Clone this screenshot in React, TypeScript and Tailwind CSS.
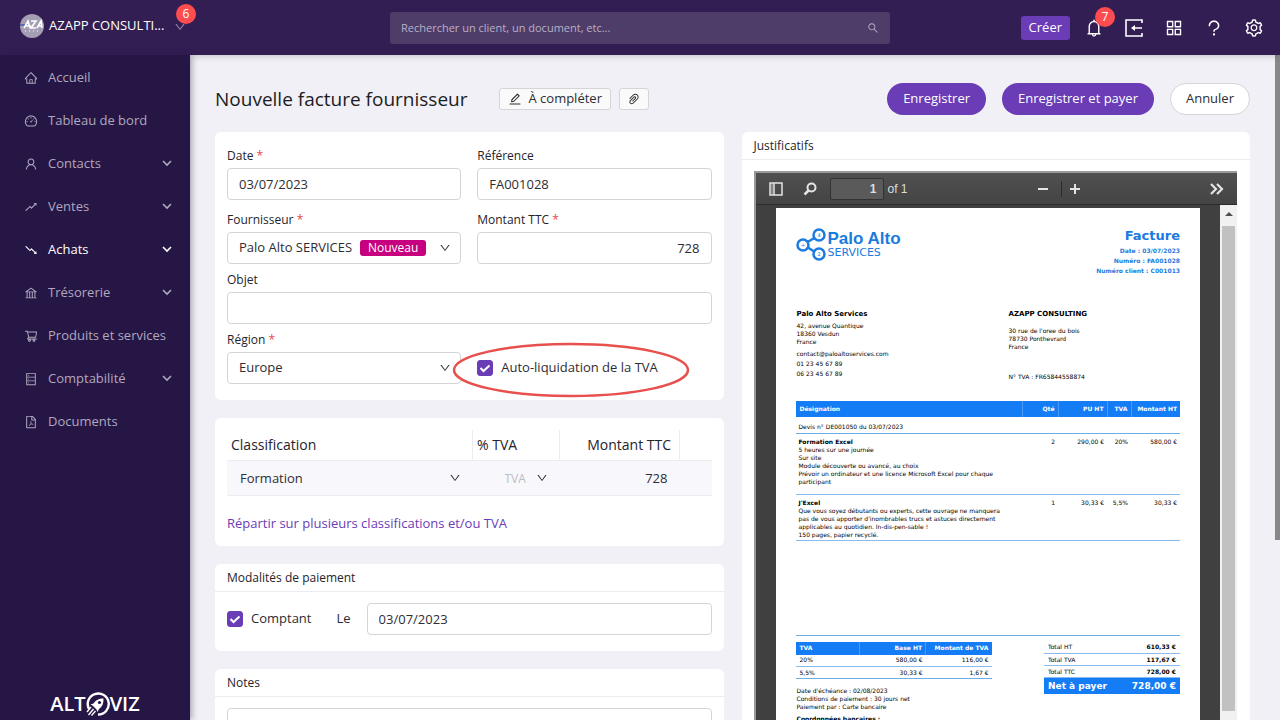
import { useState } from "react";
import type { ReactNode } from "react";
import {
    AiOutlineAppstore,
    AiOutlineBank,
    AiOutlineBell,
    AiOutlineDashboard,
    AiOutlineDatabase,
    AiOutlineDown,
    AiOutlineEdit,
    AiOutlineFall,
    AiOutlineFilePdf,
    AiOutlineHome,
    AiOutlinePaperClip,
    AiOutlineQuestion,
    AiOutlineRise,
    AiOutlineSearch,
    AiOutlineSetting,
    AiOutlineShoppingCart,
    AiOutlineUser,
} from "react-icons/ai";

const NAV = [
    { label: "Accueil", icon: AiOutlineHome },
    { label: "Tableau de bord", icon: AiOutlineDashboard },
    { label: "Contacts", icon: AiOutlineUser, expandable: true },
    { label: "Ventes", icon: AiOutlineRise, expandable: true },
    { label: "Achats", icon: AiOutlineFall, expandable: true, active: true },
    { label: "Trésorerie", icon: AiOutlineBank, expandable: true },
    { label: "Produits et services", icon: AiOutlineShoppingCart },
    { label: "Comptabilité", icon: AiOutlineDatabase, expandable: true },
    { label: "Documents", icon: AiOutlineFilePdf },
];

const INVOICE_LINES = [
    {
        title: "Formation Excel",
        text: [
            "5 heures sur une journée",
            "Sur site",
            "Module découverte ou avancé, au choix",
            "Prévoir un ordinateur et une licence Microsoft Excel pour chaque",
            "participant",
        ],
        qty: "2",
        unit: "290,00 €",
        vat: "20%",
        total: "580,00 €",
        height: "h-[61px]",
    },
    {
        title: "J'Excel",
        text: [
            "Que vous soyez débutants ou experts, cette ouvrage ne manquera",
            "pas de vous apporter d'inombrables trucs et astuces directement",
            "applicables au quotidien. In-dis-pen-sable !",
            "150 pages, papier recyclé.",
        ],
        qty: "1",
        unit: "30,33 €",
        vat: "5,5%",
        total: "30,33 €",
        height: "h-[46px]",
    },
];

const TOTALS = [
    ["Total HT", "610,33 €"],
    ["Total TVA", "117,67 €"],
    ["Total TTC", "728,00 €"],
];

const inputClass =
    "h-8 w-full min-w-0 rounded border border-[#d5d5d9] bg-white px-[11px] text-[13px] text-[#2d2d33] outline-none focus:border-[#6a3cb5]";

function Header() {
    return (
        <header className="relative z-10 flex h-[55px] shrink-0 items-center justify-between bg-[#331e54] pl-5 pr-4 text-white shadow-md">
            <button className="relative -mt-1 flex w-[170px] items-center gap-1">
                <svg viewBox="0 0 24 24" className="size-6 shrink-0">
                    <circle cx="12" cy="12" r="12" fill="#a49fb4" />
                    <path d="M0 11h7" stroke="#4656b0" strokeWidth="1.500" />
                    <path d="M4 14l4-7 2 7M6 12h5M11 7h5l-5 7h5M17 14l4-7 1 7M18 12h4" fill="none" stroke="#fff" strokeWidth="1.600" />
                    <path d="M5 17h1M9 17h1M13 17h1M17 17h1" stroke="#fff" strokeWidth="1" />
                </svg>
                <span className="whitespace-nowrap pl-px text-[13px] font-medium">AZAPP CONSULTI...</span>
                <AiOutlineDown className="absolute left-[154px] top-[7px] size-3 text-[#9b8fb0]" />
                <span className="absolute -top-2.5 left-[156px] flex size-5 items-center justify-center rounded-full bg-[#ff4d4f] text-xs">6</span>
            </button>

            <form role="search" className="absolute left-1/2 top-3 flex h-8 w-[500px] -translate-x-1/2 items-center rounded-[3px] bg-[#4e3d69] px-[11px]">
                <input
                    type="search"
                    aria-label="Rechercher"
                    placeholder="Rechercher un client, un document, etc..."
                    className="min-w-0 flex-1 bg-transparent text-[11px] outline-none placeholder:text-[#b9b0c6]"
                />
                <AiOutlineSearch className="size-3 text-[#b9b0c6]" />
            </form>

            <div className="flex items-center gap-5">
                <button className="-mr-1.5 h-6 rounded-[3px] bg-[#6a3cb5] px-2 text-[13px]">Créer</button>
                <button aria-label="Notifications" className="relative">
                    <AiOutlineBell className="size-5" />
                    <span className="absolute -top-[11px] left-[11px] flex size-5 items-center justify-center rounded-full bg-[#ff4d4f] text-xs">7</span>
                </button>
                <button aria-label="Se déconnecter">
                    <svg viewBox="0 0 20 20" className="size-5" fill="none" stroke="currentColor" strokeWidth="1.600">
                        <path d="M18 5V2H2v16h16v-3M9 10h9" />
                        <path d="M7 10l4-3v6z" fill="currentColor" stroke="none" />
                    </svg>
                </button>
                <button aria-label="Applications"><AiOutlineAppstore className="size-5" /></button>
                <button aria-label="Aide"><AiOutlineQuestion className="size-5" /></button>
                <button aria-label="Paramètres"><AiOutlineSetting className="size-5" /></button>
            </div>
        </header>
    );
}

function Sidebar() {
    return (
        <aside className="relative z-10 flex w-[190px] shrink-0 flex-col bg-[#261645] shadow-[2px_0_6px_rgba(30,20,60,0.35)]">
            <nav className="flex-1 pt-px">
                {NAV.map(({ label, icon: Icon, expandable, active }) => (
                    <a
                        key={label}
                        href="#"
                        className={`flex h-[43px] items-center pl-6 pr-[18px] text-[13px] ${active ? "font-medium text-white" : "text-[#b0a8bf]"}`}
                    >
                        <Icon className="mr-2.5 size-3.5 shrink-0" />
                        <span className="flex-1 whitespace-nowrap">{label}</span>
                        {expandable && (
                            <svg viewBox="0 0 10 10" className="size-2.5 shrink-0" fill="none" stroke="currentColor" strokeWidth="1.600">
                                <path d="M1 2l4 4 4-4" />
                            </svg>
                        )}
                    </a>
                ))}
            </nav>
            <div className="flex h-7 items-start justify-center text-xl font-semibold leading-6 text-white">
                <span>ALT</span>
                <svg viewBox="0 0 24 24" className="size-6" fill="none" stroke="#fff">
                    <path d="M3 17A10.500 10.500 0 1 1 12 22.500" strokeWidth="2.400" />
                    <path d="M17.500 6.500c-5 0-8 2-10 5l-3 1 2 1 4 4 1 2.500 1.500-3c3-2 4.800-5.500 4.500-10.500z" fill="#fff" stroke="none" />
                    <circle cx="13.500" cy="10.500" r="1.600" fill="#261645" stroke="none" />
                    <path d="M5 15l-4 5M7.500 17l-5 6M9.500 19l-4 4.500" strokeWidth="1.400" />
                </svg>
                <span>VIZ</span>
            </div>
        </aside>
    );
}

function Field({ id, label, required, children }: { id: string; label: string; required?: boolean; children: ReactNode }) {
    return (
        <div className="min-w-0">
            <label htmlFor={id} className="block h-[22px] text-xs font-medium leading-5 text-[#24242c]">
                {label} {required && <span className="text-[#e5484d]">*</span>}
            </label>
            {children}
        </div>
    );
}

function Select({ id, value, children }: { id: string; value: string; children?: ReactNode }) {
    return (
        <div className="relative">
            <select id={id} className={`${inputClass} appearance-none`}>
                <option>{value}</option>
            </select>
            {children}
            <AiOutlineDown className="pointer-events-none absolute right-2.5 top-2.5 size-3 text-[#2d2d33]" />
        </div>
    );
}

function Checkbox({ label }: { label: string }) {
    const [checked, setChecked] = useState(true);
    return (
        <label className="relative flex items-center gap-2 whitespace-nowrap text-[13px] text-[#2d2d33]">
            <input
                type="checkbox"
                checked={checked}
                onChange={(e) => setChecked(e.target.checked)}
                className="size-4 appearance-none rounded-[3px] border border-[#6a3cb5] checked:bg-[#6a3cb5]"
            />
            {checked && (
                <svg viewBox="0 0 16 16" className="pointer-events-none absolute left-0 size-4" fill="none" stroke="#fff" strokeWidth="2">
                    <path d="M3.500 8l3 3 6-5.500" />
                </svg>
            )}
            {label}
        </label>
    );
}

function Card({ title, children, className = "" }: { title?: string; children: ReactNode; className?: string }) {
    return (
        <section className={`shrink-0 rounded-md bg-white ${className}`}>
            {title && <h2 className="h-7 border-b border-[#ececf0] px-3 text-xs font-medium leading-[27px] text-[#24242c]">{title}</h2>}
            {children}
        </section>
    );
}

function Invoice() {
    return (
        <article className="mx-5 mt-[3px] h-[600px] bg-white px-5 pt-5 font-['DejaVu_Sans',sans-serif] text-[6px] leading-2 text-black">
            <div className="flex h-[82px] justify-between">
                <div className="flex items-start">
                    <svg viewBox="0 0 32 34" className="h-[34px] w-8" fill="#fff" stroke="#1b7be0" strokeWidth="2.500">
                        <path d="M8 16L22 8M8 17l14 9" />
                        <circle cx="7" cy="17" r="5.500" />
                        <circle cx="23" cy="7" r="5.500" />
                        <circle cx="23" cy="26" r="5.500" />
                        <text x="5" y="19" fontSize="5" fill="#1b7be0" stroke="none">+</text>
                        <text x="21.500" y="9" fontSize="5" fill="#1b7be0" stroke="none">4</text>
                        <text x="21.500" y="28" fontSize="5" fill="#1b7be0" stroke="none">2</text>
                    </svg>
                    <div className="pt-0.5 text-[#1b7be0]">
                        <div className="font-['Liberation_Sans',sans-serif] text-[17px] font-bold leading-[18px]">Palo Alto</div>
                        <div className="text-[11px] leading-2.5">SERVICES</div>
                    </div>
                </div>
                <div className="text-right font-bold leading-2.5 text-[#1b7be0]">
                    <div className="mb-0.5 text-[13px] leading-4">Facture</div>
                    <div>Date : 03/07/2023</div>
                    <div>Numéro : FA001028</div>
                    <div>Numéro client : C001013</div>
                </div>
            </div>

            <div className="grid h-[91px] grid-cols-[212px_1fr] px-px">
                <div>
                    <div className="mb-1 text-[7px] font-bold">Palo Alto Services</div>
                    <div>42, avenue Quantique</div>
                    <div>18360 Vesdun</div>
                    <div>France</div>
                    <div className="mt-[3px] leading-2.5">contact@paloaltoservices.com</div>
                    <div className="leading-2.5">01 23 45 67 89</div>
                    <div className="leading-2.5">06 23 45 67 89</div>
                </div>
                <div>
                    <div className="mb-[9px] text-[7px] font-bold">AZAPP CONSULTING</div>
                    <div>30 rue de l'oree du bois</div>
                    <div>78730 Ponthevrard</div>
                    <div>France</div>
                    <div className="mt-[22px]">N° TVA : FR65844558874</div>
                </div>
            </div>

            <table className="w-full table-fixed border-collapse">
                <colgroup>
                    <col />
                    <col className="w-9" />
                    <col className="w-[49px]" />
                    <col className="w-6" />
                    <col className="w-[49px]" />
                </colgroup>
                <thead>
                    <tr className="h-4 bg-[#147cf5] text-right text-white">
                        <th className="px-1 text-left">Désignation</th>
                        <th className="border-l border-[#4b9bf8] px-[3px]">Qté</th>
                        <th className="border-l border-[#4b9bf8] px-[3px]">PU HT</th>
                        <th className="border-l border-[#4b9bf8] px-[3px]">TVA</th>
                        <th className="whitespace-nowrap border-l border-[#4b9bf8] px-[3px]">Montant HT</th>
                    </tr>
                </thead>
                <tbody>
                    <tr className="h-4 border-b border-[#6aaee8]">
                        <td colSpan={5} className="px-[3px] pt-1">Devis n° DE001050 du 03/07/2023</td>
                    </tr>
                    {INVOICE_LINES.map((line) => (
                        <tr key={line.title} className={`border-b border-[#8abbef] text-right align-top ${line.height}`}>
                            <td className="whitespace-nowrap px-[3px] pt-1 text-left">
                                <div className="font-bold">{line.title}</div>
                                {line.text.map((t) => <div key={t}>{t}</div>)}
                            </td>
                            <td className="px-[3px] pt-1">{line.qty}</td>
                            <td className="px-[3px] pt-1">{line.unit}</td>
                            <td className="px-[3px] pt-1">{line.vat}</td>
                            <td className="px-[3px] pt-1">{line.total}</td>
                        </tr>
                    ))}
                </tbody>
            </table>

            <div className="mt-[94px] flex items-start justify-between border-t border-[#6aaee8] pt-1.5">
                <div>
                    <table className="w-[196px] table-fixed border-collapse text-right">
                        <thead>
                            <tr className="h-[13px] bg-[#147cf5] text-white">
                                <th className="w-16 px-1 text-left">TVA</th>
                                <th className="border-x border-[#4b9bf8] px-[3px]">Base HT</th>
                                <th className="w-[66px] whitespace-nowrap px-[3px]">Montant de TVA</th>
                            </tr>
                        </thead>
                        <tbody>
                            <tr className="h-3 border-b border-[#8abbef]">
                                <td className="px-1 text-left">20%</td>
                                <td className="px-[3px]">580,00 €</td>
                                <td className="px-[3px]">116,00 €</td>
                            </tr>
                            <tr className="h-3 border-b border-[#6aaee8]">
                                <td className="px-1 text-left">5,5%</td>
                                <td className="px-[3px]">30,33 €</td>
                                <td className="px-[3px]">1,67 €</td>
                            </tr>
                        </tbody>
                    </table>
                    <div className="mt-2 px-px">
                        <div>Date d'échéance : 02/08/2023</div>
                        <div>Conditions de paiement : 30 jours net</div>
                        <div>Paiement par : Carte bancaire</div>
                        <div className="mt-1 font-bold">Coordonnées bancaires :</div>
                    </div>
                </div>
                <table className="w-[136px] border-collapse">
                    <tbody>
                        {TOTALS.map(([name, amount]) => (
                            <tr key={name} className="h-3 border-b border-[#8abbef]">
                                <th className="px-1 text-left font-normal">{name}</th>
                                <td className="px-1 text-right font-bold">{amount}</td>
                            </tr>
                        ))}
                        <tr className="h-4 bg-[#147cf5] text-[9px] font-bold text-white">
                            <th className="whitespace-nowrap px-1 text-left">Net à payer</th>
                            <td className="whitespace-nowrap px-1 text-right">728,00 €</td>
                        </tr>
                    </tbody>
                </table>
            </div>
        </article>
    );
}

function PdfViewer() {
    return (
        <div className="ml-3 mr-[13px] mt-[11px] border-l-2 border-t-2 border-[#999] bg-[#404040] font-['Liberation_Sans',sans-serif] text-[#dcdcdc]">
            <div className="flex h-8 items-center border-b border-[#2b2b2b] bg-linear-to-b from-[#505050] to-[#444] px-[13px]">
                <button aria-label="Panneau latéral">
                    <svg viewBox="0 0 14 14" className="size-3.5" fill="none" stroke="#e4e4e4" strokeWidth="1.500">
                        <path d="M1 1h12v12H1zM5 1v12" />
                        <path d="M3 2v10" stroke="#999" />
                    </svg>
                </button>
                <button aria-label="Rechercher dans le document" className="ml-5">
                    <svg viewBox="0 0 14 14" className="size-3.5" fill="none" stroke="#e4e4e4" strokeWidth="2">
                        <circle cx="8.500" cy="5.500" r="4" />
                        <path d="M5.500 8.500L1.500 12.500" strokeWidth="2.500" />
                    </svg>
                </button>
                <input
                    aria-label="Page"
                    defaultValue="1"
                    className="ml-[13px] h-[22px] w-[54px] rounded-[2px] border border-[#333] bg-[#5a5a5a] px-1.5 text-right text-xs font-bold outline-none"
                />
                <span className="ml-1 text-xs">of 1</span>
                <div className="flex flex-1 items-center justify-center pr-1">
                    <button aria-label="Zoom arrière" className="flex size-5 items-center justify-center">
                        <span className="h-0.5 w-2.5 bg-[#e4e4e4]" />
                    </button>
                    <span className="mx-2 h-4 w-px bg-[#2b2b2b]" />
                    <button aria-label="Zoom avant">
                        <svg viewBox="0 0 10 10" className="size-2.5" stroke="#e4e4e4" strokeWidth="2"><path d="M5 0v10M0 5h10" /></svg>
                    </button>
                </div>
                <button aria-label="Outils">
                    <svg viewBox="0 0 14 12" className="h-3 w-3.5" fill="none" stroke="#e4e4e4" strokeWidth="2.200">
                        <path d="M1 1l5 5-5 5M7 1l5 5-5 5" />
                    </svg>
                </button>
            </div>
            <div className="flex">
                <div className="min-w-0 flex-1"><Invoice /></div>
                <div className="flex w-[17px] flex-col items-center bg-[#f1f1f1]">
                    <svg viewBox="0 0 8 4" className="mb-2.5 mt-[7px] h-1 w-2 shrink-0" fill="#505050"><path d="M0 4l4-4 4 4z" /></svg>
                    <div className="h-[485px] w-[13px] bg-[#c1c1c1]" />
                </div>
            </div>
        </div>
    );
}

function InvoiceForm() {
    return (
        <div className="flex min-w-0 flex-1 flex-col gap-[18px]">
            <Card className="px-3 pb-4 pt-3.5">
                <div className="grid grid-cols-2 gap-x-4 gap-y-1.5">
                    <div className="mb-1">
                        <Field id="date" label="Date" required>
                            <input id="date" defaultValue="03/07/2023" className={inputClass} />
                        </Field>
                    </div>
                    <Field id="reference" label="Référence">
                        <input id="reference" defaultValue="FA001028" className={inputClass} />
                    </Field>
                    <Field id="supplier" label="Fournisseur" required>
                        <Select id="supplier" value="Palo Alto SERVICES">
                            <span className="pointer-events-none absolute left-[133px] top-2 h-4 rounded-[3px] bg-[#c6007e] px-2 text-xs leading-4 text-white">Nouveau</span>
                        </Select>
                    </Field>
                    <Field id="amount" label="Montant TTC" required>
                        <input id="amount" defaultValue="728" className={`${inputClass} text-right`} />
                    </Field>
                    <div className="col-span-2">
                        <Field id="subject" label="Objet">
                            <input id="subject" className={inputClass} />
                        </Field>
                    </div>
                    <Field id="region" label="Région" required>
                        <Select id="region" value="Europe" />
                    </Field>
                    <div className="relative flex items-center pt-[22px]">
                        {/* highlight drawn around the reverse-charge option */}
                        <svg viewBox="0 0 238 56" className="pointer-events-none absolute -left-[25px] top-3 h-14 w-[238px]">
                            <ellipse cx="119" cy="28" rx="117" ry="26" fill="#fff" stroke="#e8504e" strokeWidth="2.500" />
                        </svg>
                        <Checkbox label="Auto-liquidation de la TVA" />
                    </div>
                </div>
            </Card>

            <Card className="px-3 pb-[13px] pt-3">
                <table className="w-full table-fixed text-[13px] leading-5 text-[#2d2d33]">
                    <colgroup>
                        <col />
                        <col className="w-[87px]" />
                        <col className="w-[120px]" />
                        <col className="w-8" />
                    </colgroup>
                    <thead>
                        <tr className="h-[30px] text-left text-sm leading-5 text-[#24242c]">
                            <th className="px-1 font-medium">Classification</th>
                            <th className="border-l border-[#ececf0] px-1 font-medium">% TVA</th>
                            <th className="border-x border-[#ececf0] px-2 text-right font-medium">Montant TTC</th>
                            <th />
                        </tr>
                    </thead>
                    <tbody>
                        <tr className="h-[35px] border-y border-[#ececf0] bg-[#f8f8fc]">
                            <td className="relative">
                                <select aria-label="Classification" className="w-full appearance-none bg-transparent pl-[13px]">
                                    <option>Formation</option>
                                </select>
                                <AiOutlineDown className="pointer-events-none absolute right-3 top-[11px] size-3" />
                            </td>
                            <td className="relative">
                                <select aria-label="% TVA" className="w-full appearance-none bg-transparent pl-8 text-xs text-[#bcbcc2]">
                                    <option>TVA</option>
                                </select>
                                <AiOutlineDown className="pointer-events-none absolute right-3 top-[11px] size-3" />
                            </td>
                            <td className="px-3 text-right">728</td>
                            <td />
                        </tr>
                    </tbody>
                </table>
                <a href="#" className="mt-[17px] block text-[13px] leading-5 text-[#6a3cb5]">Répartir sur plusieurs classifications et/ou TVA</a>
            </Card>

            <Card title="Modalités de paiement">
                <div className="flex items-center px-3 pb-4 pt-[11px]">
                    <Checkbox label="Comptant" />
                    <label htmlFor="due" className="ml-[25px] mr-4 text-[13px] text-[#2d2d33]">Le</label>
                    <input id="due" defaultValue="03/07/2023" className={inputClass} />
                </div>
            </Card>

            <Card title="Notes">
                <div className="px-3 pb-3 pt-[11px]">
                    <textarea aria-label="Notes" rows={4} className="w-full rounded border border-[#d5d5d9]" />
                </div>
            </Card>
        </div>
    );
}

export default function App() {
    return (
        <div className="flex h-screen flex-col overflow-hidden font-['Open_Sans',sans-serif]">
            <Header />
            <div className="flex min-h-0 flex-1">
                <Sidebar />
                <main className="flex min-w-0 flex-1 overflow-hidden bg-[#f1f0f6]">
                    <div className="min-w-0 flex-1 px-[25px]">
                        <div className="flex h-[77px] items-center pt-[11px]">
                            <h1 className="mr-8 text-[19px] font-medium text-[#1c1c24]">Nouvelle facture fournisseur</h1>
                            <button className="flex h-[22px] items-center gap-1.5 rounded-[3px] border border-[#d5d5d9] bg-[#fafafa] px-2 text-[13px] text-[#2d2d33]">
                                <AiOutlineEdit className="size-3.5" />
                                À compléter
                            </button>
                            <button aria-label="Pièces jointes" className="ml-2 flex h-[22px] items-center rounded-[3px] border border-[#d5d5d9] bg-[#fafafa] px-[7px] text-[#2d2d33]">
                                <AiOutlinePaperClip className="size-3.5" />
                            </button>
                            <div className="ml-auto flex gap-4 whitespace-nowrap text-[13px]">
                                <button className="h-8 rounded-full bg-[#6a3cb5] px-4 text-white">Enregistrer</button>
                                <button className="h-8 rounded-full bg-[#6a3cb5] px-4 text-white">Enregistrer et payer</button>
                                <button className="h-8 rounded-full border border-[#d5d5d9] bg-white px-[15px] text-[#2d2d33]">Annuler</button>
                            </div>
                        </div>
                        <div className="flex items-start gap-[18px]">
                            <InvoiceForm />
                            <Card title="Justificatifs" className="min-w-0 flex-1 pb-3">
                                <PdfViewer />
                            </Card>
                        </div>
                    </div>
                    <div className="h-[485px] w-[5px] shrink-0 bg-[#888]" />
                </main>
            </div>
        </div>
    );
}
